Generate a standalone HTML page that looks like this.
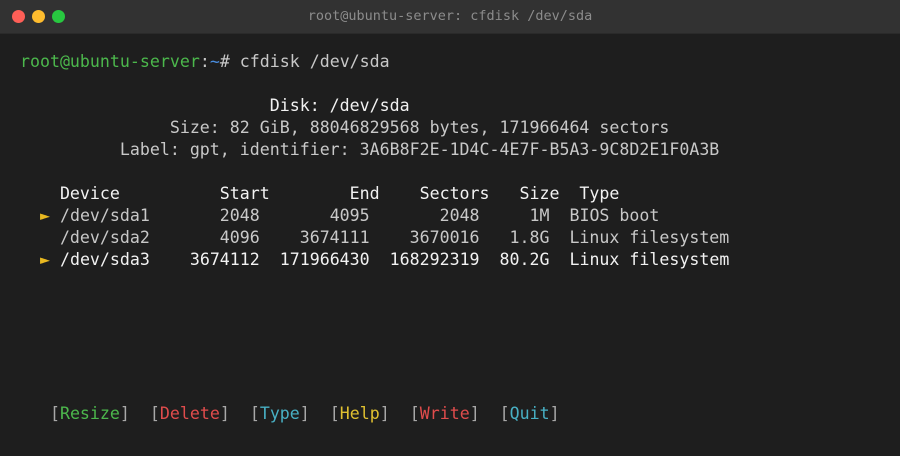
<!DOCTYPE html>
<html><head><meta charset="utf-8"><style>
html,body{margin:0;padding:0;background:#1e1e1e;width:900px;height:456px;overflow:hidden}
.tb{position:absolute;left:0;top:0;width:900px;height:33px;background:#323232;border-bottom:1px solid #2a2a2a}
.d{position:absolute;top:10px;width:13px;height:13px;border-radius:50%}
.tt{position:absolute;top:0;left:0;width:900px;height:33px;text-align:center;font-family:"DejaVu Sans Mono","Liberation Mono",monospace;font-size:13.5px;line-height:33px;color:#8c8c8c}
pre{position:absolute;left:0;top:51px;margin:0;font-family:"DejaVu Sans Mono","Liberation Mono",monospace;font-size:16.6px;line-height:22px;color:#c8c8c8}
.g{color:#4cb84c}.b{color:#4a8ee0}.w{color:#f2f2f2}.y{color:#e8b820}.r{color:#e04c4c}.c{color:#48b0c4}.h{color:#e0c030}.k{color:#a8a8a8}
</style></head><body>
<div class="tb"><div class="d" style="left:12px;background:#fe5f57"></div><div class="d" style="left:32px;background:#febc2e"></div><div class="d" style="left:52px;background:#28c840"></div><div class="tt">root@ubuntu-server: cfdisk /dev/sda</div></div>
<pre>  <span class="g">root@ubuntu-server</span>:<span class="b">~</span># cfdisk /dev/sda

<span class="w">                           Disk: /dev/sda</span>
                 Size: 82 GiB, 88046829568 bytes, 171966464 sectors
            Label: gpt, identifier: 3A6B8F2E-1D4C-4E7F-B5A3-9C8D2E1F0A3B

<span class="w">      Device          Start        End    Sectors   Size  Type</span>
    <span class="y">►</span> /dev/sda1       2048       4095       2048     1M  BIOS boot
      /dev/sda2       4096    3674111    3670016   1.8G  Linux filesystem
<span class="w">    <span class="y">►</span> /dev/sda3    3674112  171966430  168292319  80.2G  Linux filesystem</span>






     <span class="k">[</span><span class="g">Resize</span><span class="k">]</span>  <span class="k">[</span><span class="r">Delete</span><span class="k">]</span>  <span class="k">[</span><span class="c">Type</span><span class="k">]</span>  <span class="k">[</span><span class="h">Help</span><span class="k">]</span>  <span class="k">[</span><span class="r">Write</span><span class="k">]</span>  <span class="k">[</span><span class="c">Quit</span><span class="k">]</span></pre>
</body></html>
